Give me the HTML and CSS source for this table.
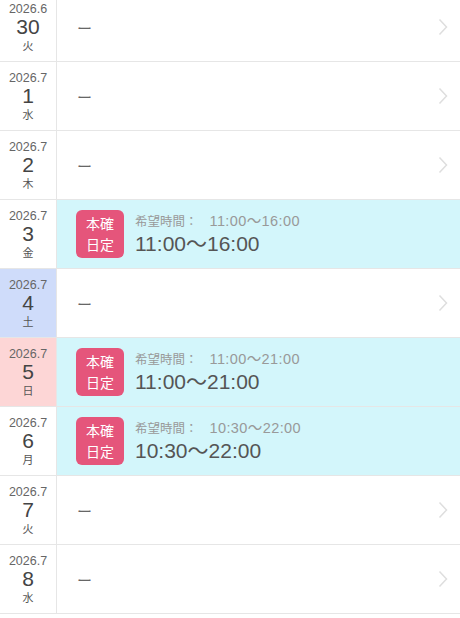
FILE: index.html
```html
<!DOCTYPE html>
<html lang="ja">
<head>
    <meta charset="UTF-8">
    <meta name="viewport" content="width=device-width, initial-scale=1.0">
    <title>シフト希望</title>
    <link rel="stylesheet" href="styles.css">
</head>
<body>
    <ul class="day-list">
        <li class="day-row">
            <div class="date"><span class="ym">2026.6</span><span class="d">30</span><span class="wd">火</span></div>
            <div class="body"><span class="none">ー</span><svg class="chev" viewBox="0 0 10 18"><path d="M1.5 1.5 L8.5 9 L1.5 16.5"/></svg></div>
        </li>
        <li class="day-row">
            <div class="date"><span class="ym">2026.7</span><span class="d">1</span><span class="wd">水</span></div>
            <div class="body"><span class="none">ー</span><svg class="chev" viewBox="0 0 10 18"><path d="M1.5 1.5 L8.5 9 L1.5 16.5"/></svg></div>
        </li>
        <li class="day-row">
            <div class="date"><span class="ym">2026.7</span><span class="d">2</span><span class="wd">木</span></div>
            <div class="body"><span class="none">ー</span><svg class="chev" viewBox="0 0 10 18"><path d="M1.5 1.5 L8.5 9 L1.5 16.5"/></svg></div>
        </li>
        <li class="day-row fixed">
            <div class="date"><span class="ym">2026.7</span><span class="d">3</span><span class="wd">金</span></div>
            <div class="body">
                <span class="badge">本確<br>日定</span>
                <div class="times"><span class="wish">希望時間：<span class="wish-t">11:00〜16:00</span></span><span class="real">11:00〜16:00</span></div>
            </div>
        </li>
        <li class="day-row sat">
            <div class="date"><span class="ym">2026.7</span><span class="d">4</span><span class="wd">土</span></div>
            <div class="body"><span class="none">ー</span><svg class="chev" viewBox="0 0 10 18"><path d="M1.5 1.5 L8.5 9 L1.5 16.5"/></svg></div>
        </li>
        <li class="day-row fixed sun">
            <div class="date"><span class="ym">2026.7</span><span class="d">5</span><span class="wd">日</span></div>
            <div class="body">
                <span class="badge">本確<br>日定</span>
                <div class="times"><span class="wish">希望時間：<span class="wish-t">11:00〜21:00</span></span><span class="real">11:00〜21:00</span></div>
            </div>
        </li>
        <li class="day-row fixed">
            <div class="date"><span class="ym">2026.7</span><span class="d">6</span><span class="wd">月</span></div>
            <div class="body">
                <span class="badge">本確<br>日定</span>
                <div class="times"><span class="wish">希望時間：<span class="wish-t">10:30〜22:00</span></span><span class="real">10:30〜22:00</span></div>
            </div>
        </li>
        <li class="day-row">
            <div class="date"><span class="ym">2026.7</span><span class="d">7</span><span class="wd">火</span></div>
            <div class="body"><span class="none">ー</span><svg class="chev" viewBox="0 0 10 18"><path d="M1.5 1.5 L8.5 9 L1.5 16.5"/></svg></div>
        </li>
        <li class="day-row">
            <div class="date"><span class="ym">2026.7</span><span class="d">8</span><span class="wd">水</span></div>
            <div class="body"><span class="none">ー</span><svg class="chev" viewBox="0 0 10 18"><path d="M1.5 1.5 L8.5 9 L1.5 16.5"/></svg></div>
        </li>
    </ul>
</body>
</html>
```

FILE: styles.css
```css
body {
    margin: 0;
    background-color: #fff;
    font-family: 'Liberation Sans', 'Noto Sans CJK JP', sans-serif;
    color: #555;
    overflow: hidden;
}
.day-list {
    list-style: none;
    margin: -7px 0 0 0;
    padding: 0;
}
.day-row {
    display: flex;
    height: 68px;
    border-bottom: 1px solid #e6e6e6;
}
.date {
    width: 56px;
    flex-shrink: 0;
    border-right: 1px solid #e6e6e6;
    display: flex;
    flex-direction: column;
    align-items: center;
    justify-content: center;
    background-color: #fff;
}
.ym {
    font-size: 12.5px;
    line-height: 14px;
    color: #666;
}
.d {
    font-size: 21px;
    line-height: 22px;
    color: #444;
}
.wd {
    font-family: 'Noto Sans CJK JP', sans-serif;
    font-size: 11px;
    line-height: 14px;
    color: #555;
}
.sat .date { background-color: #cfdcfa; }
.sun .date { background-color: #fdd6d6; }
.body {
    flex: 1;
    display: flex;
    align-items: center;
    padding: 0 12px 0 20px;
}
.fixed .body {
    background-color: #d3f6fb;
    padding-left: 19px;
}
.none {
    font-family: 'Noto Sans CJK JP', sans-serif;
    font-size: 15px;
    color: #666;
    flex: 1;
}
.chev {
    width: 10px;
    height: 18px;
    fill: none;
    stroke: #dedede;
    stroke-width: 1.5;
}
.badge {
    width: 48px;
    height: 48px;
    border-radius: 6px;
    background-color: #e5557b;
    color: #fff;
    font-family: 'Noto Sans CJK JP', sans-serif;
    font-size: 14px;
    line-height: 21px;
    display: flex;
    align-items: center;
    justify-content: center;
    text-align: center;
    flex-shrink: 0;
}
.times {
    display: flex;
    flex-direction: column;
    margin-left: 11px;
}
.wish {
    font-size: 12.5px;
    line-height: 18px;
    color: #999;
}
.wish-t {
    font-size: 14.5px;
    letter-spacing: 0.4px;
    margin-left: 12px;
}
.real {
    font-size: 21px;
    line-height: 26px;
    color: #555;
}
```
